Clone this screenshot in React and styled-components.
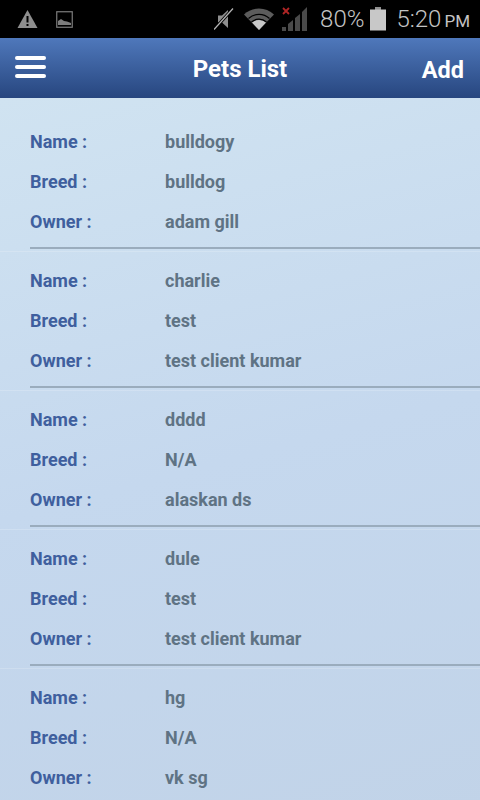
import React from 'react'
import styled, { createGlobalStyle } from 'styled-components'

const pets = [
  { name: 'bulldogy', breed: 'bulldog', owner: 'adam gill' },
  { name: 'charlie', breed: 'test', owner: 'test client kumar' },
  { name: 'dddd', breed: 'N/A', owner: 'alaskan ds' },
  { name: 'dule', breed: 'test', owner: 'test client kumar' },
  { name: 'hg', breed: 'N/A', owner: 'vk sg' },
]

const App = () => (
  <Screen>
    <GlobalStyle />
    <StatusBar>
      <StatusGroup>
        <svg width="21" height="20" viewBox="0 0 21 20">
          <path d="M10.5 1 L20.5 19 H.5 Z" fill="#8e8e8e" />
          <rect x="9.5" y="7" width="2" height="6.5" fill="#000" />
          <rect x="9.5" y="15" width="2" height="2" fill="#000" />
        </svg>
        <svg width="17" height="17" viewBox="0 0 17 17">
          <rect x=".75" y=".75" width="15.5" height="15.5" fill="none" stroke="#7d7d7d" strokeWidth="1.2" />
          <path d="M2 13 L2 10 L5 8 L8 10 L11 10.5 L15 12 V14 H2 Z" fill="#7d7d7d" />
        </svg>
      </StatusGroup>
      <StatusRight>
        <MuteIcon width="20" height="24" viewBox="0 0 20 24">
          <path d="M4 8.5 H8 L14 3 V21 L8 15.5 H4 Z" fill="#8e8e8e" />
          <path d="M0 22.5 L19 1.5" stroke="#000" strokeWidth="3" />
          <path d="M0 22.5 L19 1.5" stroke="#b5b5b5" strokeWidth="1.2" />
        </MuteIcon>
        <WifiIcon width="30" height="22" viewBox="0 0 30 22">
          <path d="M0 6.5 C8 -1.5 22 -1.5 30 6.5 L15 22 Z" fill="#5c5c5c" />
          <path d="M4.5 10.5 C10.5 5 19.5 5 25.5 10.5" fill="none" stroke="#000" strokeWidth="1.3" />
          <path d="M8 14.5 C12 11.2 18 11.2 22 14.5 L15 22 Z" fill="#c8c8c8" />
          <path d="M7.5 14 C12 10.2 18 10.2 22.5 14" fill="none" stroke="#000" strokeWidth="1.3" />
        </WifiIcon>
        <svg width="26" height="26" viewBox="0 0 26 26">
          <path d="M2 2 L8 8 M8 2 L2 8" stroke="#b02525" strokeWidth="1.8" />
          <rect x="1" y="21" width="4" height="4" fill="#4a4a4a" />
          <path d="M7 25 V18 L12 14 V25 Z" fill="#4a4a4a" />
          <path d="M14 25 V12 L19 8 V25 Z" fill="#4a4a4a" />
          <path d="M21 25 V6 L26 1 V25 Z" fill="#4a4a4a" />
        </svg>
        <Percent>80%</Percent>
        <svg width="16" height="24" viewBox="0 0 16 24">
          <rect x="5" y="0" width="6" height="3" fill="#8f8f8f" />
          <rect x="0" y="2.5" width="16" height="21" fill="#c8c8c8" />
        </svg>
        <Clock>5:20<small>PM</small></Clock>
      </StatusRight>
    </StatusBar>
    <Header>
      <Burger><span /><span /><span /></Burger>
      <Title>Pets List</Title>
      <AddButton>Add</AddButton>
    </Header>
    <List>
      {pets.map((p) => (
        <Card key={p.name}>
          <Row><Label>Name :</Label><Value>{p.name}</Value></Row>
          <Row><Label>Breed :</Label><Value>{p.breed}</Value></Row>
          <Row><Label>Owner :</Label><Value>{p.owner}</Value></Row>
          <Divider />
        </Card>
      ))}
    </List>
  </Screen>
)

export default App

const GlobalStyle = createGlobalStyle`
  *, *::before, *::after { box-sizing: border-box; }
  html, body { margin: 0; padding: 0; background: #cbdcef; }
  body { font-family: Roboto, "Liberation Sans", sans-serif; }
`

const Screen = styled.div`
  width: 480px;
  height: 800px;
  overflow: hidden;
  display: flex;
  flex-direction: column;
`

const StatusBar = styled.div`
  height: 38px;
  flex: none;
  background: #000;
  display: flex;
  align-items: center;
  justify-content: space-between;
  padding: 0 10px 0 17px;
`

const StatusGroup = styled.div`
  display: flex;
  align-items: center;
  gap: 18px;
`

const StatusRight = styled.div`
  display: flex;
  align-items: center;
  gap: 9px;
`

const MuteIcon = styled.svg`
  margin-right: 1px;
`

const WifiIcon = styled.svg`
  margin-right: -2px;
`

const Percent = styled.span`
  font-size: 24px;
  font-weight: 300;
  color: #c4c4c4;
  margin-left: 4px;
  margin-right: -3px;
`

const Clock = styled.span`
  font-size: 24px;
  font-weight: 300;
  color: #c4c4c4;
  margin-left: 1px;
  small {
    font-size: 17px;
    font-weight: 400;
    margin-left: 3px;
  }
`

const Header = styled.div`
  height: 60px;
  flex: none;
  background: linear-gradient(#4f78bb, #27467f);
  display: flex;
  align-items: center;
  justify-content: space-between;
  padding: 0 16px 0 15px;
  position: relative;
`

const Burger = styled.div`
  width: 31px;
  margin-bottom: 2px;
  display: flex;
  flex-direction: column;
  gap: 5px;
  span {
    height: 4px;
    border-radius: 2px;
    background: #fff;
  }
`

const Title = styled.div`
  position: absolute;
  left: 0;
  right: 0;
  top: 17px;
  text-align: center;
  font-size: 24px;
  font-weight: 700;
  color: #fff;
`

const AddButton = styled.div`
  font-size: 23.5px;
  font-weight: 700;
  color: #fff;
  margin-top: 4px;
`

const List = styled.div`
  flex: 1;
  background: linear-gradient(165deg, #d0e3f1, #c5d8ee 50%, #c1d3e8);
  padding-top: 23px;
`

const Card = styled.div`
  padding-left: 30px;
  padding-bottom: 2px;
  margin-bottom: 8px;
  border-bottom: 1px solid rgba(255, 255, 255, 0.18);
`

const Row = styled.div`
  display: flex;
  height: 40px;
  align-items: center;
  font-size: 18px;
  font-weight: 700;
`

const Label = styled.div`
  width: 135px;
  color: #3f5f9e;
`

const Value = styled.div`
  color: #5f7384;
`

const Divider = styled.div`
  height: 2px;
  margin-top: 6px;
  background: #9aacbd;
`
